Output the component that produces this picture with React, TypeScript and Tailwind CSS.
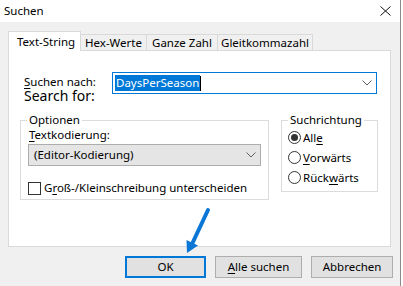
import React from "react";

const Chevron = () => (
  <svg width="10" height="6" viewBox="0 0 10 6" className="shrink-0">
    <path d="M0.5 0.5 L5 5 L9.5 0.5" fill="none" stroke="#606060" strokeWidth="1" />
  </svg>
);

const Radio = ({ checked }: { checked?: boolean }) => (
  <span className="w-[13px] h-[13px] rounded-full border border-[#333] bg-white flex items-center justify-center shrink-0">
    {checked && <span className="w-[7px] h-[7px] rounded-full bg-[#333]" />}
  </span>
);

export default function App() {
  return (
    <div className="w-[403px] h-[286px] bg-white flex text-[11.5px] text-black font-['Noto_Sans',sans-serif] relative overflow-hidden">
      <div className="w-[401px] h-full border-r border-[#8a8a8a] flex flex-col">
        {/* Title bar */}
        <div className="h-[22px] bg-white flex items-center pl-[4px] pr-[9px] shrink-0">
          <span className="flex-1 leading-[16px]">Suchen</span>
          <svg width="11" height="10" viewBox="0 0 11 10">
            <path d="M0.5 0.5 L10.5 9.5 M10.5 0.5 L0.5 9.5" stroke="#111" strokeWidth="1" />
          </svg>
        </div>
        {/* Body */}
        <div className="flex-1 bg-[#f0f0f0] flex flex-col pl-[8px] pr-[7px] pt-[9px]">
          {/* Tabs */}
          <div className="flex items-end h-[20px] relative z-10">
            <div className="h-[20px] w-[73px] bg-white border border-b-0 border-[#d9d9d9] flex items-center pl-[8px] leading-[16px]">
              Text-String
            </div>
            <div className="h-[17px] w-[66px] border border-l-0 border-b-0 border-[#d9d9d9] flex items-center justify-center leading-[16px]">
              Hex-Werte
            </div>
            <div className="h-[17px] w-[71px] border border-l-0 border-b-0 border-[#d9d9d9] flex items-center justify-center leading-[16px]">
              Ganze Zahl
            </div>
            <div className="h-[17px] w-[95px] border border-l-0 border-b-0 border-[#d9d9d9] flex items-center justify-center leading-[16px]">
              Gleitkommazahl
            </div>
          </div>
          {/* Panel */}
          <div className="-mt-px h-[197px] w-[383px] bg-white border border-[#d9d9d9] flex flex-col pt-[21px] pl-[15px]">
            <div className="flex">
              <div className="w-[88px] flex flex-col">
                <span className="leading-[14px] mt-[3px]">
                  <span className="underline underline-offset-2">S</span>uchen nach:
                </span>
                <span className="text-[14px] leading-[14px]">Search for:</span>
              </div>
              <div className="w-[265px] h-[22px] border border-[#0078d7] bg-white flex items-center pl-[2px] pr-[4px]">
                <span className="bg-[#0078d7] text-white leading-[16px] px-[1px]">DaysPerSeason</span>
                <span className="w-px h-[15px] bg-black" />
                <span className="flex-1" />
                <Chevron />
              </div>
            </div>
            <div className="flex mt-[9px] ml-[-4px]">
              <fieldset className="w-[249px] h-[88px] border border-[#dcdcdc] px-[7px] pt-0 flex flex-col">
                <legend className="px-[2px] leading-[16px] ml-[-1px]">Optionen</legend>
                <span className="leading-[16px] ml-[1px] mt-[-1px]">
                  <span className="underline underline-offset-2">T</span>extkodierung:
                </span>
                <div className="mt-[1px] w-[233px] h-[22px] bg-[#e5e5e5] border border-[#adadad] flex items-center pl-[5px] pr-[4px]">
                  <span className="flex-1 leading-[16px]">(Editor-Kodierung)</span>
                  <Chevron />
                </div>
                <div className="mt-[14px] flex items-center gap-[3px]">
                  <span className="w-[13px] h-[13px] border border-[#333] bg-white shrink-0" />
                  <span className="leading-[16px]">
                    G<span className="underline underline-offset-2">r</span>oß-/Kleinschreibung unterscheiden
                  </span>
                </div>
              </fieldset>
              <fieldset className="ml-[12px] w-[97px] h-[80px] border border-[#dcdcdc] px-[6px] flex flex-col gap-[7px]">
                <legend className="px-[2px] leading-[16px]">Suchrichtung</legend>
                <div className="flex items-center gap-[2px] mt-[3px]">
                  <Radio checked />
                  <span className="leading-[13px]">
                    All<span className="underline underline-offset-2">e</span>
                  </span>
                </div>
                <div className="flex items-center gap-[2px]">
                  <Radio />
                  <span className="leading-[13px]">
                    <span className="underline underline-offset-2">V</span>orwärts
                  </span>
                </div>
                <div className="flex items-center gap-[2px]">
                  <Radio />
                  <span className="leading-[13px]">
                    Rück<span className="underline underline-offset-2">w</span>ärts
                  </span>
                </div>
              </fieldset>
            </div>
          </div>
          {/* Buttons */}
          <div className="flex justify-end mt-[9px]">
            <div className="w-[81px] h-[22px] bg-[#e1e1e1] border-2 border-[#0078d7] flex items-center justify-center leading-[16px]">
              OK
            </div>
            <div className="ml-[9px] w-[87px] h-[22px] bg-[#e1e1e1] border border-[#adadad] flex items-center justify-center leading-[16px]">
              <span>
                <span className="underline underline-offset-2">A</span>lle suchen
              </span>
            </div>
            <div className="ml-[9px] w-[82px] h-[22px] bg-[#e1e1e1] border border-[#adadad] flex items-center justify-center leading-[16px]">
              Abbrechen
            </div>
          </div>
        </div>
      </div>
      {/* Annotation arrow */}
      <svg className="absolute left-[180px] top-[205px]" width="35" height="55" viewBox="0 0 35 55">
        <line x1="28" y1="5" x2="12.5" y2="38" stroke="#0a76d6" strokeWidth="4" strokeLinecap="round" />
        <polygon points="7,48 18,40.5 6.5,35" fill="#0a76d6" />
      </svg>
    </div>
  );
}
